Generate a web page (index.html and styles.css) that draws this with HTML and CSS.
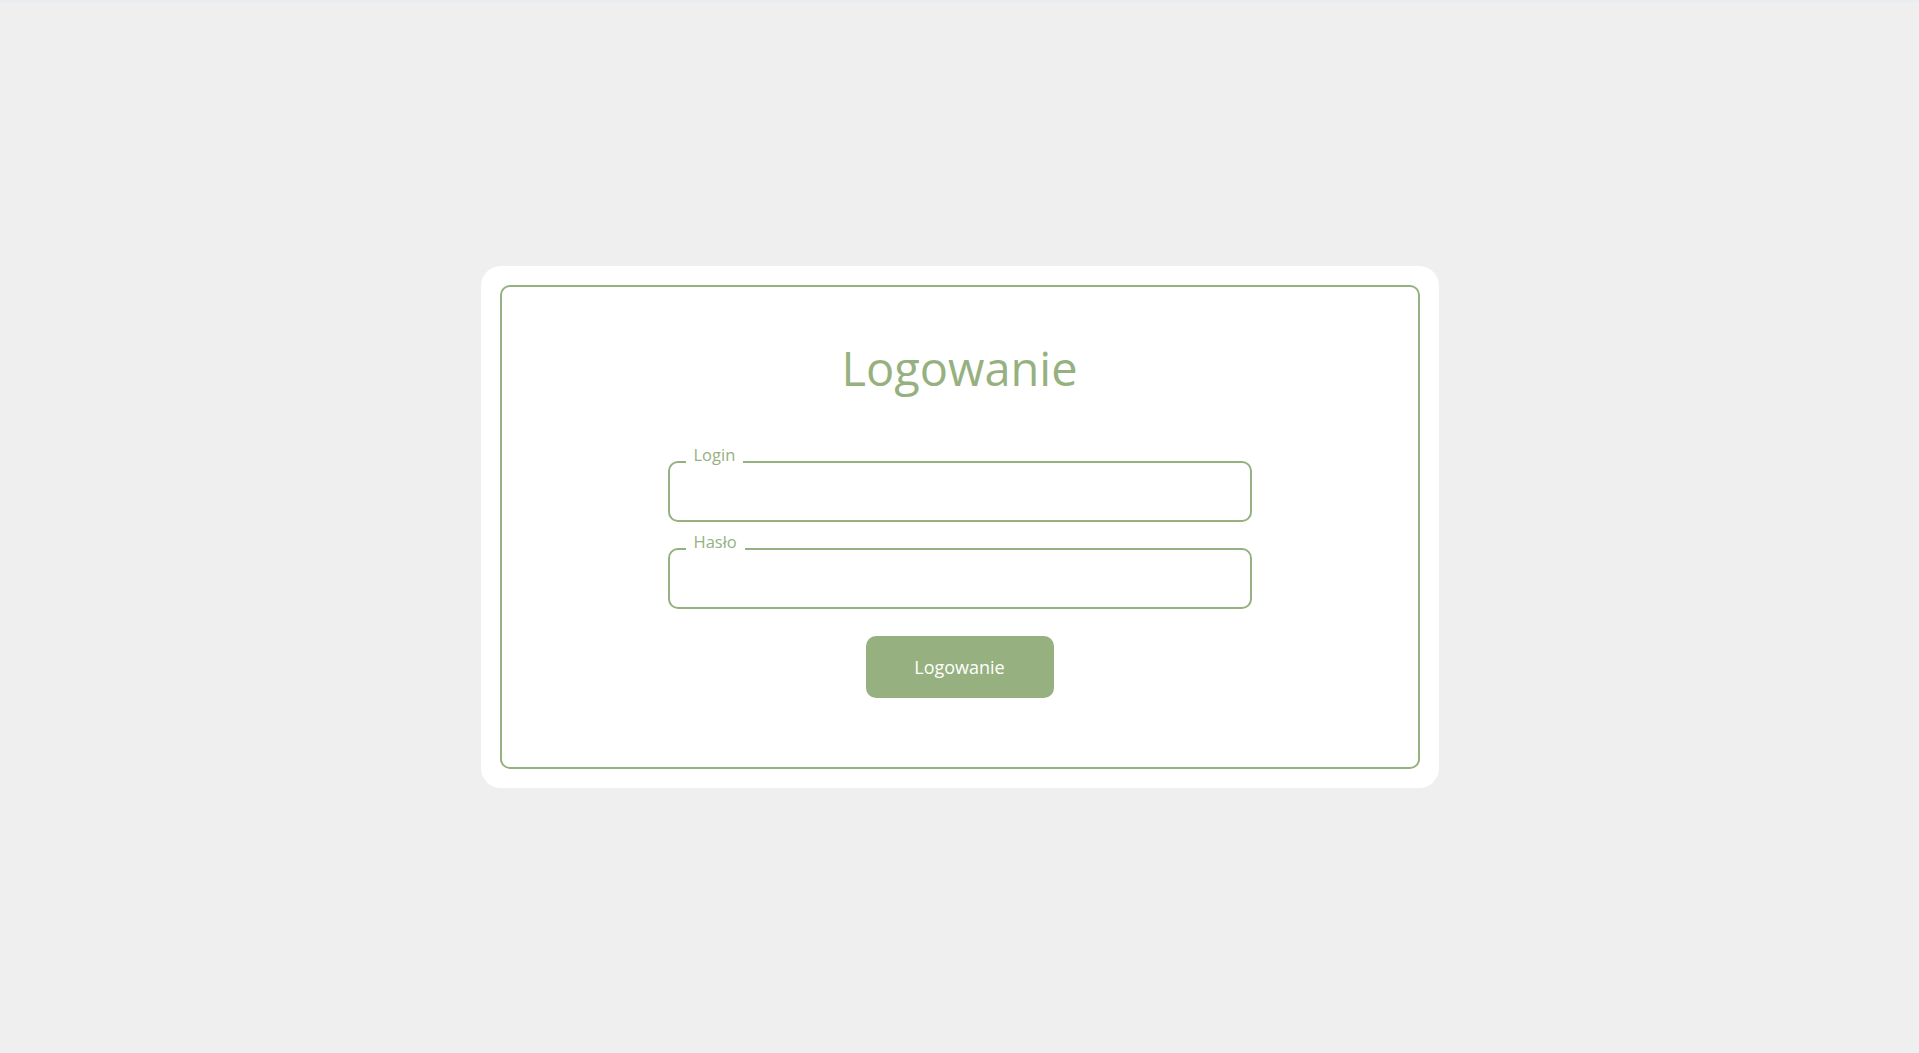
FILE: index.html
```html
<!DOCTYPE html>
<html lang="pl">
<head>
<meta charset="utf-8">
<title>Logowanie</title>
<link rel="stylesheet" href="styles.css">
</head>
<body>
<main class="page">
  <section class="card">
    <form class="frame">
      <h1 class="title">Logowanie</h1>
      <fieldset class="field">
        <legend class="field-label">Login</legend>
        <input class="field-input" type="text" name="login">
      </fieldset>
      <fieldset class="field field-second">
        <legend class="field-label">Hasło</legend>
        <input class="field-input" type="password" name="haslo">
      </fieldset>
      <button class="submit" type="button">Logowanie</button>
    </form>
  </section>
</main>
</body>
</html>
```

FILE: styles.css
```css
html, body {
  margin: 0;
  padding: 0;
}

body {
  background: #efefef;
  font-family: "Open Sans", "Noto Sans", "Liberation Sans", sans-serif;
  border-top: 2px solid #e8edf1;
}

.page {
  height: calc(100vh - 2px);
  display: flex;
  align-items: center;
  justify-content: center;
}

.card {
  width: 958px;
  box-sizing: border-box;
  background: #ffffff;
  border-radius: 20px;
  padding: 19px;
  margin-top: -1px;
}

.frame {
  box-sizing: border-box;
  height: 484px;
  border: 2px solid #96b17f;
  border-radius: 10px;
  display: flex;
  flex-direction: column;
  align-items: center;
  padding-top: 52px;
}

.title {
  margin: 0 0 48px;
  font-size: 47px;
  line-height: 58px;
  font-weight: 400;
  color: #96b17f;
}

.field {
  width: 584px;
  box-sizing: border-box;
  margin: 0;
  padding: 0 16px 3px;
  border: 2px solid #96b17f;
  border-radius: 10px;
}

.field-second {
  margin-top: 10px;
}

.field-label {
  padding: 0 8px 13px;
  font-size: 16.5px;
  line-height: 20px;
  color: #96b17f;
}

.field-input {
  display: block;
  width: 100%;
  height: 39px;
  box-sizing: border-box;
  border: none;
  outline: none;
  background: transparent;
  font-family: inherit;
  font-size: 16px;
  padding: 0;
}

.submit {
  margin-top: 27px;
  width: 188px;
  height: 62px;
  border: none;
  border-radius: 10px;
  background: #96b17f;
  color: #ffffff;
  font-family: inherit;
  font-size: 18px;
  cursor: pointer;
}
```
